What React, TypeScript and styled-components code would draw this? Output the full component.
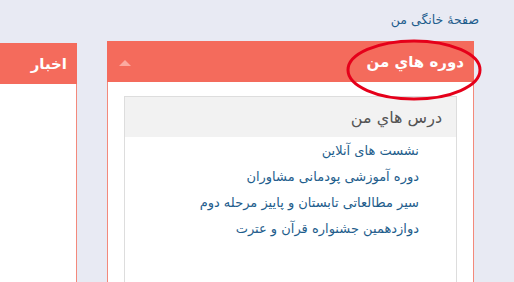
import React from 'react'
import styled, { createGlobalStyle } from 'styled-components'

const GlobalStyle = createGlobalStyle`
	html, body {
		margin: 0;
		padding: 0;
		background: #e8eaf3;
		overflow: hidden;
	}
	body {
		font-family: "DejaVu Sans", "Noto Sans", sans-serif;
	}
`

const courses = [
	'نشست های آنلاین',
	'دوره آموزشی پودمانی مشاوران',
	'سیر مطالعاتی تابستان و پاییز مرحله دوم',
	'دوازدهمین جشنواره قرآن و عترت',
]

const App: React.FC = () => {
	return (
		<Page>
			<GlobalStyle />
			<Breadcrumb>
				<CrumbLink>صفحهٔ خانگی من</CrumbLink>
			</Breadcrumb>
			<Columns>
				<Panel $width={367}>
					<PanelHeader>
						<PanelTitle>دوره هاي من</PanelTitle>
						<Caret />
						<Highlight viewBox="0 0 140 64">
							<ellipse cx="70" cy="32" rx="66" ry="29" fill="none" stroke="#e5001a" strokeWidth="3" />
						</Highlight>
					</PanelHeader>
					<PanelBody>
						<Block>
							<BlockHeader>درس هاي من</BlockHeader>
							<CourseList>
								{courses.map((c) => (
									<CourseItem key={c}>{c}</CourseItem>
								))}
							</CourseList>
						</Block>
					</PanelBody>
				</Panel>
				<Panel $width={77} $offset={2} $cut>
					<PanelHeader>
						<PanelTitle>اخبار</PanelTitle>
					</PanelHeader>
					<PanelBody />
				</Panel>
			</Columns>
		</Page>
	)
}

const Page = styled.div`
	width: 514px;
	height: 282px;
	overflow: hidden;
	direction: rtl;
`

const Breadcrumb = styled.div`
	height: 41px;
	padding-right: 35px;
	box-sizing: border-box;
	padding-top: 9px;
`

const CrumbLink = styled.a`
	color: #1e5d8c;
	font-size: 12.5px;
	line-height: 16px;
`

const Columns = styled.div`
	display: flex;
	gap: 30px;
	padding-right: 40px;
	align-items: flex-start;
`

const Panel = styled.div<{ $width: number; $offset?: number; $cut?: boolean }>`
	width: ${(p) => p.$width}px;
	flex-shrink: 0;
	margin-top: ${(p) => p.$offset || 0}px;
	border: 1px solid #f3897b;
	border-top: 0;
	border-left-width: ${(p) => (p.$cut ? 0 : 1)}px;
	box-sizing: border-box;
	background: #fff;
	height: 260px;
	display: flex;
	flex-direction: column;
`

const PanelHeader = styled.div`
	position: relative;
	flex-shrink: 0;
	height: 41px;
	background: #f46b5c;
	display: flex;
	align-items: center;
	justify-content: space-between;
	padding: 0 10px 0 12px;
	margin: 0 -1px;
`

const PanelTitle = styled.span`
	color: #fff;
	font-weight: bold;
	font-size: 15px;
	line-height: 20px;
`

const Caret = styled.span`
	width: 0;
	height: 0;
	margin-top: 3px;
	border-left: 6px solid transparent;
	border-right: 6px solid transparent;
	border-bottom: 6px solid #fbaaa0;
`

const Highlight = styled.svg`
	position: absolute;
	right: -10px;
	top: -3px;
	width: 140px;
	height: 64px;
	overflow: visible;
	pointer-events: none;
`

const PanelBody = styled.div`
	flex: 1;
	padding: 14px 16px 0 16px;
`

const Block = styled.div`
	border: 1px solid #dddddd;
	height: 220px;
`

const BlockHeader = styled.div`
	background: #f2f2f2;
	height: 40px;
	display: flex;
	align-items: center;
	padding-right: 14px;
	color: #555;
	font-size: 16px;
`

const CourseList = styled.ul`
	list-style: none;
	margin: 0;
	padding: 1px 37px 0 0;
`

const CourseItem = styled.li`
	color: #1e5d8c;
	font-size: 13px;
	line-height: 26px;
`

export default App
